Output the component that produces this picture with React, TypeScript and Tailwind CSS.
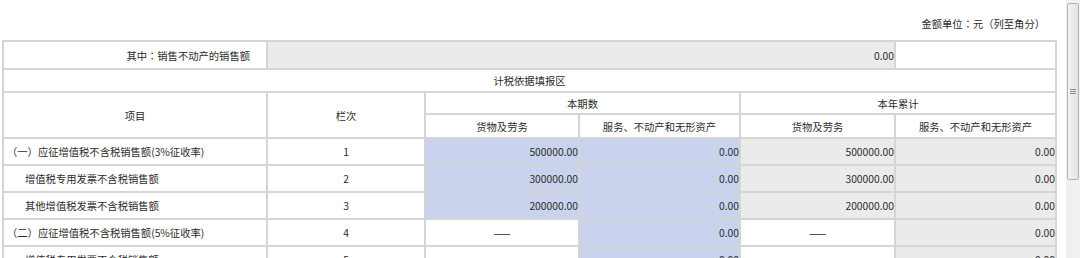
import React from "react";

type Tone = "white" | "blue" | "gray";

const toneClass: Record<Tone, string> = {
  white: "bg-white",
  blue: "bg-[#c9d3ee]",
  gray: "bg-[#ebebeb]",
};

type Row = {
  label: string;
  indent: boolean;
  no: string;
  c3: string;
  c3t: Tone;
  c4: string;
  c5: string;
  c5t: Tone;
  c6: string;
};

const rows: Row[] = [
  { label: "（一）应征增值税不含税销售额(3%征收率)", indent: false, no: "1", c3: "500000.00", c3t: "blue", c4: "0.00", c5: "500000.00", c5t: "gray", c6: "0.00" },
  { label: "增值税专用发票不含税销售额", indent: true, no: "2", c3: "300000.00", c3t: "blue", c4: "0.00", c5: "300000.00", c5t: "gray", c6: "0.00" },
  { label: "其他增值税发票不含税销售额", indent: true, no: "3", c3: "200000.00", c3t: "blue", c4: "0.00", c5: "200000.00", c5t: "gray", c6: "0.00" },
  { label: "（二）应征增值税不含税销售额(5%征收率)", indent: false, no: "4", c3: "——", c3t: "white", c4: "0.00", c5: "——", c5t: "white", c6: "0.00" },
  { label: "增值税专用发票不含税销售额", indent: true, no: "5", c3: "", c3t: "white", c4: "0.00", c5: "", c5t: "white", c6: "0.00" },
];

const cell = "border-2 border-[#d5d5d5] p-0 align-middle whitespace-nowrap overflow-hidden";

function Colon() {
  return <span style={{ fontFamily: '"Noto Sans CJK TC", sans-serif' }}>：</span>;
}

function Value({ v, tone }: { v: string; tone: Tone }) {
  const isDash = v === "——";
  return (
    <td className={`${cell} ${toneClass[tone]} ${isDash ? "text-center" : "text-right pr-0"}`}>{v}</td>
  );
}

export default function App() {
  return (
    <div
      className="flex h-[258px] w-[1080px] overflow-hidden bg-white text-[#2b2b2b] text-[10.3px] leading-[15px]"
      style={{ fontFamily: '"Noto Sans CJK SC", "Noto Sans", sans-serif' }}
    >
      <div className="w-[1066px] shrink-0">
        <div className="flex h-[40px] justify-end pr-[21px] pt-[16px]">
          <span>
            金额单位<Colon />元（列至角分）
          </span>
        </div>
        <table className="ml-[2px] w-[1053px] table-fixed border-collapse">
          <colgroup>
            <col className="w-[264px]" />
            <col className="w-[158px]" />
            <col className="w-[154px]" />
            <col className="w-[161px]" />
            <col className="w-[155px]" />
            <col className="w-[161px]" />
          </colgroup>
          <tbody>
            <tr className="h-[28px]">
              <td className={`${cell} bg-white text-right pr-[16px]`}>
                其中<Colon />销售不动产的销售额
              </td>
              <td colSpan={4} className={`${cell} bg-[#ebebeb] text-right`}>0.00</td>
              <td className={`${cell} bg-white`}></td>
            </tr>
            <tr className="h-[23px]">
              <td colSpan={6} className={`${cell} bg-white text-center`}>计税依据填报区</td>
            </tr>
            <tr className="h-[22px]">
              <td rowSpan={2} className={`${cell} bg-white text-center`}>项目</td>
              <td rowSpan={2} className={`${cell} bg-white text-center`}>栏次</td>
              <td colSpan={2} className={`${cell} bg-white text-center`}>本期数</td>
              <td colSpan={2} className={`${cell} bg-white text-center`}>本年累计</td>
            </tr>
            <tr className="h-[24px]">
              <td className={`${cell} bg-white text-center`}>货物及劳务</td>
              <td className={`${cell} bg-white text-center`}>服务、不动产和无形资产</td>
              <td className={`${cell} bg-white text-center`}>货物及劳务</td>
              <td className={`${cell} bg-white text-center`}>服务、不动产和无形资产</td>
            </tr>
            {rows.map((r, i) => (
              <tr key={i} className="h-[27px]">
                <td className={`${cell} bg-white text-left ${r.indent ? "pl-[21px]" : "pl-[3px]"}`}>{r.label}</td>
                <td className={`${cell} bg-white text-center`}>{r.no}</td>
                <Value v={r.c3} tone={r.c3t} />
                <Value v={r.c4} tone="blue" />
                <Value v={r.c5} tone={r.c5t} />
                <Value v={r.c6} tone="gray" />
              </tr>
            ))}
          </tbody>
        </table>
      </div>
      <div className="relative h-full w-[14px] shrink-0 bg-[#f0f0f0]">
        <div className="absolute left-[1px] right-[1px] top-[3px] h-[177px] rounded-[2px] border border-[#b4b4b4] bg-gradient-to-r from-[#f3f3f3] to-[#e2e2e2]">
          <div className="absolute left-1/2 top-[85px] flex -translate-x-1/2 flex-col gap-[1px]">
            <div className="h-px w-[6px] bg-[#8a8a8a]" />
            <div className="h-px w-[6px] bg-[#8a8a8a]" />
            <div className="h-px w-[6px] bg-[#8a8a8a]" />
          </div>
        </div>
      </div>
    </div>
  );
}
